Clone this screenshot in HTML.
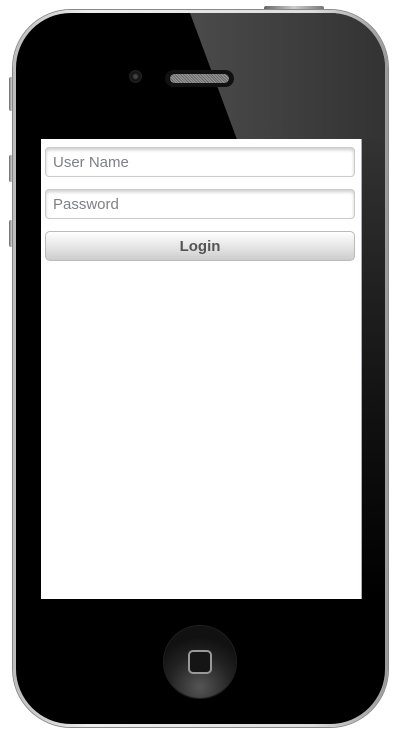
<!DOCTYPE html>
<html><head><style>
body{margin:0;width:407px;height:732px;background:#fff;position:relative;overflow:hidden;font-family:"Liberation Sans",sans-serif}
.phone{position:absolute;left:13px;top:10px;width:375px;height:717px;border-radius:58px;background:linear-gradient(90deg,#bbb,#eee 20%,#ddd 80%,#999);box-shadow:0 0 0 1px #888}
.inner{position:absolute;left:3px;top:3px;right:3px;bottom:3px;border-radius:55px;background:#000;overflow:hidden}
.gloss{position:absolute;left:0;top:0;width:100%;height:140px;background:linear-gradient(90deg,#626262,#474747 55%,#333);clip-path:polygon(174px 0,400px 0,400px 140px,226px 140px)}
.gloss2{position:absolute;left:345px;top:126px;width:30px;height:460px;background:linear-gradient(#333,#111 60%,#000)}
.btn{position:absolute;background:linear-gradient(90deg,#666,#ccc,#777);border-radius:2px}
.screen{position:absolute;left:41px;top:139px;width:320px;height:460px;background:#fff;border-right:1px solid #aab}
.in{position:absolute;left:4px;border:1px solid #ccc;border-radius:4px;box-shadow:inset 0 2px 3px rgba(0,0,0,.2);font-size:15px;color:#7f7f88;line-height:30px;padding-left:7px;box-sizing:border-box;width:310px;height:30px}
.login{position:absolute;left:4px;top:92px;width:310px;height:30px;box-sizing:border-box;border:1px solid #bbb;border-radius:5px;background:linear-gradient(#fff,#e2e2e2 60%,#ccc);text-align:center;font-weight:bold;font-size:15px;color:#555;line-height:30px}
</style></head><body>
<div class="btn" style="left:9px;top:77px;width:5px;height:34px"></div>
<div class="btn" style="left:9px;top:155px;width:5px;height:27px"></div>
<div class="btn" style="left:9px;top:220px;width:5px;height:27px"></div>
<div class="btn" style="left:264px;top:6px;width:60px;height:5px"></div>
<div class="btn" style="left:135px;top:10px;width:3px;height:3px;background:#222"></div>
<div class="phone"><div class="inner"><div class="gloss"></div><div class="gloss2"></div>
<div style="position:absolute;left:113px;top:57px;width:13px;height:13px;border-radius:50%;background:radial-gradient(#444 15%,#111 40%,#222 70%,#000)"></div>
<div style="position:absolute;left:149px;top:57px;width:69px;height:17px;border-radius:9px;background:#111"></div>
<div style="position:absolute;left:154px;top:61px;width:59px;height:9px;border-radius:5px;background:repeating-linear-gradient(45deg,#999 0 1px,#666 1px 2px)"></div>
<div style="position:absolute;left:148px;top:613px;width:72px;height:72px;border-radius:50%;background:radial-gradient(circle at 50% 85%,#555,#222 45%,#111 70%);box-shadow:0 0 0 1px #222"></div>
<div style="position:absolute;left:172px;top:637px;width:20px;height:20px;border:2px solid #999;border-radius:5px;background:#151515"></div>
</div></div>
<div class="screen">
<div class="in" style="top:8px">User Name</div>
<div class="in" style="top:50px">Password</div>
<div class="login">Login</div>
</div>
</body></html>
